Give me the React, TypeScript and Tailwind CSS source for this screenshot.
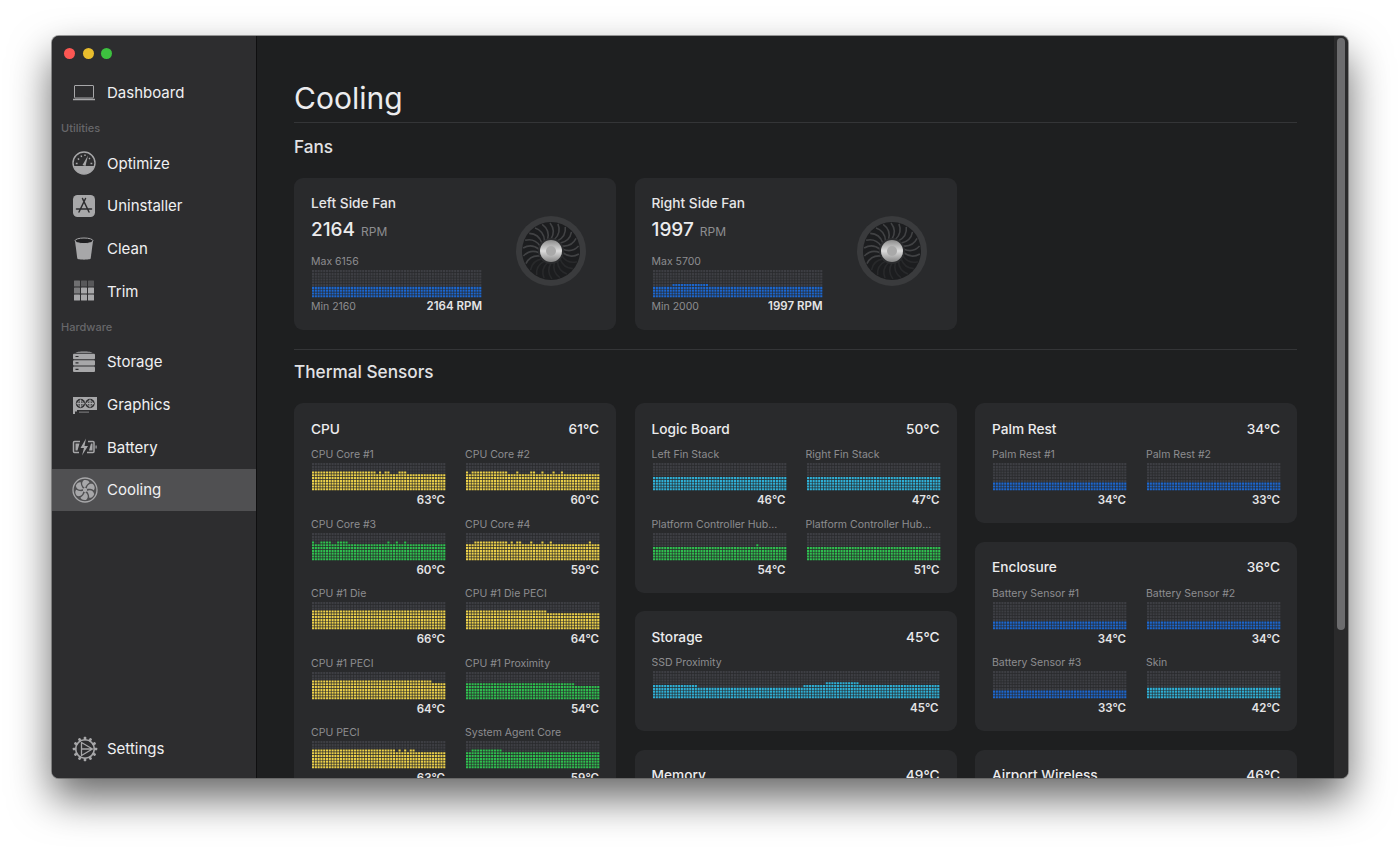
import React from 'react';

const ROWS = 10;
const ROW_H = 2.8;

const YELLOW = '#ebd04a';
const GREEN = '#2fbf4f';
const CYAN = '#2fb0d6';
const BLUE = '#1c67cf';

type Run = [number, number, number];

// runs are [from %, to %, rows]
const Chart = ({ width, base, color, runs = [] }: { width: number; base: number; color: string; runs?: Run[] }) => {
  const n = Math.round(width / 2.8);
  const pitch = width / n;
  let empty = '';
  let filled = '';
  for (let c = 0; c < n; c++) {
    const pct = (c / n) * 100;
    let h = base;
    runs.forEach(([a, b, v]) => {
      if (pct >= a && pct < b) h = v;
    });
    for (let r = 0; r < ROWS; r++) {
      const cell = `M${(c * pitch).toFixed(2)} ${(28 - (r + 1) * ROW_H).toFixed(1)}h2.1v2.1h-2.1z`;
      if (r < h) filled += cell;
      else empty += cell;
    }
  }
  return (
    <svg width={width} height={28} className="block ml-[1px]">
      <path d={empty} fill="#3d3e43" />
      <path d={filled} fill={color} />
    </svg>
  );
};

type Sensor = { name: string; value: string; base: number; color: string; runs?: Run[] };

const SensorCell = ({ s, width = 134 }: { s: Sensor; width?: number }) => (
  <div>
    <div className="h-[14px] mb-[2px] text-[10.5px] leading-[16px] text-[#8d8d90] truncate">{s.name}</div>
    <Chart width={width} base={s.base} color={s.color} runs={s.runs} />
    <div className="h-[14px] text-right text-[11.5px] leading-[18px] font-semibold text-[#e4e4e6]" style={{ width }}>{s.value}</div>
  </div>
);

const SensorCard = ({ title, temp, sensors, wide }: { title: string; temp: string; sensors: Sensor[]; wide?: boolean }) => (
  <div className="bg-[#292a2c] rounded-[9px] px-[17px] pt-[17px] pb-[18px]">
    <CardHead title={title} temp={temp} />
    {wide ? (
      <SensorCell s={sensors[0]} width={287} />
    ) : (
      <div className="grid grid-cols-[134px_134px] gap-x-[20px] gap-y-[11.5px]">
        {sensors.map((s, i) => <SensorCell key={i} s={s} />)}
      </div>
    )}
  </div>
);

const CardHead = ({ title, temp }: { title: string; temp: string }) => (
  <div className="flex justify-between items-center h-[18px] mb-[9px] text-[13.7px] font-medium text-[#ececee]">
    <span>{title}</span>
    <span>{temp}</span>
  </div>
);

const cpu: Sensor[] = [
  { name: 'CPU Core #1', value: '63°C', base: 6, color: YELLOW, runs: [[0, 46, 7], [50, 52, 7], [54, 58, 7], [63, 70, 7], [73, 75, 7]] },
  { name: 'CPU Core #2', value: '60°C', base: 6, color: YELLOW, runs: [[0, 1, 7], [4, 30, 7], [37, 39, 7], [46, 48, 7], [50, 51, 7], [53, 54, 8], [55, 58, 7], [63, 65, 7], [69, 71, 7]] },
  { name: 'CPU Core #3', value: '60°C', base: 6, color: GREEN, runs: [[0, 1, 7], [6, 14, 7], [17, 27, 7], [56, 58, 7], [62, 64, 7], [68, 70, 7]] },
  { name: 'CPU Core #4', value: '59°C', base: 6, color: YELLOW, runs: [[6, 30, 7], [33, 35, 7], [37, 41, 7], [47, 49, 7], [55, 57, 7], [62, 64, 7], [91, 93, 7]] },
  { name: 'CPU #1 Die', value: '66°C', base: 7, color: YELLOW },
  { name: 'CPU #1 Die PECI', value: '64°C', base: 7, color: YELLOW, runs: [[60, 100, 6]] },
  { name: 'CPU #1 PECI', value: '64°C', base: 7, color: YELLOW, runs: [[89, 100, 6]] },
  { name: 'CPU #1 Proximity', value: '54°C', base: 6, color: GREEN, runs: [[80, 100, 5]] },
  { name: 'CPU PECI', value: '63°C', base: 6, color: YELLOW, runs: [[0, 61, 7], [63, 65, 7], [68, 70, 7], [72, 74, 7], [75, 77, 7]] },
  { name: 'System Agent Core', value: '59°C', base: 6, color: GREEN, runs: [[4, 27, 7]] },
];

const logic: Sensor[] = [
  { name: 'Left Fin Stack', value: '46°C', base: 5, color: CYAN },
  { name: 'Right Fin Stack', value: '47°C', base: 5, color: CYAN },
  { name: 'Platform Controller Hub...', value: '54°C', base: 5, color: GREEN, runs: [[76, 78, 6]] },
  { name: 'Platform Controller Hub...', value: '51°C', base: 5, color: GREEN },
];

const palm: Sensor[] = [
  { name: 'Palm Rest #1', value: '34°C', base: 3, color: BLUE },
  { name: 'Palm Rest #2', value: '33°C', base: 3, color: BLUE },
];

const enclosure: Sensor[] = [
  { name: 'Battery Sensor #1', value: '34°C', base: 3, color: BLUE },
  { name: 'Battery Sensor #2', value: '34°C', base: 3, color: BLUE },
  { name: 'Battery Sensor #3', value: '33°C', base: 3, color: BLUE },
  { name: 'Skin', value: '42°C', base: 4, color: CYAN },
];

const FanGraphic = () => (
  <svg width="72" height="72" viewBox="0 0 72 72" className="shrink-0">
    <defs>
      <linearGradient id="hub" x1="0" y1="0" x2="0" y2="1">
        <stop offset="0%" stopColor="#8b8b8b" />
        <stop offset="50%" stopColor="#dcdcdc" />
        <stop offset="100%" stopColor="#858585" />
      </linearGradient>
    </defs>
    <circle cx="36" cy="36" r="35" fill="#3a3b3d" />
    <circle cx="36" cy="36" r="29" fill="#1c1d1f" />
    {Array.from({ length: 22 }).map((_, i) => (
      <path
        key={i}
        d="M36 24C39 19 39 13 35 8"
        fill="none"
        stroke={i > 6 && i < 15 ? '#28292b' : '#414244'}
        strokeWidth="1.6"
        transform={`rotate(${i * (360 / 22)} 36 36)`}
      />
    ))}
    <circle cx="36" cy="36" r="13" fill="#2b2c2e" />
    <circle cx="36" cy="36" r="11" fill="url(#hub)" />
    <circle cx="36" cy="36" r="5" fill="#a9a9a9" />
  </svg>
);

const FanCard = ({ name, rpm, max, min, runs }: { name: string; rpm: string; max: string; min: string; runs: Run[] }) => (
  <div className="bg-[#292a2c] rounded-[9px] h-[152px] pl-[17px] pr-[29px] pt-[16px] flex justify-between">
    <div className="w-[171px]">
      <div className="text-[13.7px] leading-[18px] font-medium text-[#e6e6e8]">{name}</div>
      <div className="mt-[4px] h-[25px] flex items-baseline gap-[6px]">
        <span className="text-[19px] font-medium text-[#ececee]">{rpm}</span>
        <span className="text-[12px] text-[#8d8d90]">RPM</span>
      </div>
      <div className="mt-[13px] h-[14px] text-[10.5px] leading-[16px] text-[#8d8d90]">Max {max}</div>
      <div className="mt-[2px]">
        <Chart width={170} base={4} color={BLUE} runs={runs} />
      </div>
      <div className="flex justify-between items-center h-[18px] text-[10.5px]">
        <span className="text-[#8d8d90]">Min {min}</span>
        <span className="text-[11.5px] font-semibold text-[#e4e4e6]">{rpm} RPM</span>
      </div>
    </div>
    <div className="pt-[21px]">
      <FanGraphic />
    </div>
  </div>
);

const icon = '#a7a7a9';

const LaptopIcon = () => (
  <svg width="24" height="24" viewBox="0 0 24 24" fill="none" stroke={icon}>
    <rect x="2.5" y="5.5" width="19" height="12.5" rx="0.5" strokeWidth="1" />
    <path d="M1 19.5h22" strokeWidth="1.4" />
  </svg>
);

const GaugeIcon = () => (
  <svg width="24" height="24" viewBox="0 0 24 24">
    <circle cx="12" cy="12" r="11" fill="none" stroke={icon} strokeWidth="1.4" />
    <path d="M1.600 15h20.800a10.800 10.800 0 0 1-20.800 0z" fill={icon} />
    <path d="M10.500 14l5.500-9.500 -2.500 10.500z" fill={icon} />
    <path d="M3.800 12.500h1.800M5.800 7.500l1.300 1.100M9 4.500l.7 1.500M13 3.500v1.500M18 7l-1 1M18.500 12.500h1.800" stroke={icon} strokeWidth="1.400" />
  </svg>
);

const AppIcon = () => (
  <svg width="24" height="24" viewBox="0 0 24 24">
    <rect x="1" y="1" width="22" height="22" rx="4.5" fill={icon} />
    <path d="M10.500 4.500L17 18M13.500 4.500L7 18M4.500 15h15" stroke="#2d2d2f" strokeWidth="1.500" fill="none" strokeLinecap="round" />
  </svg>
);

const BinIcon = () => (
  <svg width="24" height="24" viewBox="0 0 24 24">
    <path d="M3 4L5.300 21.500C5.600 23 18.400 23 18.700 21.500L21 4z" fill={icon} />
    <ellipse cx="12" cy="3.800" rx="9" ry="2.800" fill="#1f1f21" stroke={icon} strokeWidth="1" />
  </svg>
);

const GridIcon = () => (
  <svg width="24" height="24" viewBox="0 0 24 24">
    {[0, 1, 2].map(r => [0, 1, 2].map(c => (
      <rect
        key={`${r}-${c}`}
        x={2 + c * 7}
        y={1.5 + r * 7}
        width="6"
        height="6"
        rx="0.5"
        fill={r === 2 || (r === 1 && c > 0) ? icon : r === 1 ? '#7c7c7e' : c === 0 ? '#6f6f71' : '#58585a'}
      />
    )))}
  </svg>
);

const StorageIcon = () => (
  <svg width="24" height="24" viewBox="0 0 24 24" fill={icon}>
    <path d="M3.500 2.800C5 .9 19 .9 20.500 2.800z" />
    <rect x="1" y="3.800" width="22" height="5.400" rx="1" />
    <rect x="1" y="10.200" width="22" height="5.400" rx="1" />
    <rect x="1" y="16.600" width="22" height="5.400" rx="1" />
    <path d="M3.500 6.500h3M3.500 12.900h3M3.500 19.300h3" stroke="#2d2d2f" strokeWidth="1.200" />
  </svg>
);

const GraphicsIcon = () => (
  <svg width="26" height="24" viewBox="0 0 26 24">
    <path d="M1 4h24v13H5v1.500H3V21H1z" fill={icon} />
    <circle cx="8.500" cy="10.500" r="4.700" fill="#2d2d2f" />
    <circle cx="18" cy="10.500" r="4.700" fill="#2d2d2f" />
    <path d="M8.500 6.500v8M4.500 10.500h8M18 6.500v8M14 10.500h8" stroke={icon} strokeWidth="1.300" />
    <circle cx="8.500" cy="10.500" r="2.800" fill="none" stroke={icon} strokeWidth="0.800" />
    <circle cx="18" cy="10.500" r="2.800" fill="none" stroke={icon} strokeWidth="0.800" />
    <path d="M7 18.500h10v1.300H7z" fill="#6f6f71" />
  </svg>
);

const BatteryIcon = () => (
  <svg width="26" height="24" viewBox="0 0 26 24" fill="none">
    <path d="M8 6.500H2.500a1 1 0 0 0-1 1v9a1 1 0 0 0 1 1H7M16 6.500h5a1 1 0 0 1 1 1v9a1 1 0 0 1-1 1h-6" stroke={icon} strokeWidth="1.500" />
    <path d="M3.500 8.500h4l-2 7h-2zM19 8.500h1.500v7H17z" fill={icon} />
    <path d="M14 3.500L8.500 13H12l-2 7.500L16 11h-3.500z" fill={icon} />
    <path d="M23.500 10.500h1.200v3h-1.200z" fill={icon} />
  </svg>
);

const FanIcon = () => (
  <svg width="26" height="26" viewBox="0 0 26 26">
    <circle cx="13" cy="13" r="12" fill="none" stroke={icon} strokeWidth="1.300" />
    {[0, 60, 120, 180, 240, 300].map(a => (
      <path key={a} d="M13 11C10 9 9 5.500 12 3c3.500-.5 5 1 5.500 2.500C15.500 6.500 14 8.500 13 11z" fill={icon} transform={`rotate(${a} 13 13)`} />
    ))}
    <circle cx="13" cy="13" r="2.200" fill={icon} />
  </svg>
);

const GearIcon = () => (
  <svg width="26" height="26" viewBox="0 0 26 26" fill="none">
    {Array.from({ length: 12 }).map((_, i) => (
      <rect key={i} x="11.700" y="0.800" width="2.600" height="3.400" rx="0.600" fill={icon} transform={`rotate(${i * 30} 13 13)`} />
    ))}
    <circle cx="13" cy="13" r="9.300" stroke={icon} strokeWidth="1.600" />
    <path d="M9.500 6.500v13L20.500 13zM9.500 13h11" stroke={icon} strokeWidth="1.300" strokeLinejoin="round" />
  </svg>
);

const NavItem = ({ label, children, active }: { label: string; children: React.ReactNode; active?: boolean }) => (
  <div className={`flex items-center h-[42.67px] pl-[20px] ${active ? 'bg-[#505052]' : ''}`}>
    <div className="w-[35px] shrink-0">{children}</div>
    <span className="pt-[1px] text-[15px] text-[#f0f0f2]">{label}</span>
  </div>
);

const SectionLabel = ({ label, h }: { label: string; h: string }) => (
  <div className={`${h} flex items-center pl-[9px] text-[11px] font-medium text-[#67676a]`}>{label}</div>
);

export default function App() {
  return (
    <div className="w-[1400px] h-[847px] bg-white overflow-hidden pt-[36px] px-[52px] font-[Inter,sans-serif]">
      <div className="h-[742px] flex rounded-[7px] overflow-hidden bg-[#1e1f20] shadow-[0_0_0_1px_rgba(90,90,90,0.6),0_20px_42px_rgba(0,0,0,0.6)]">
        <aside className="w-[205px] shrink-0 flex flex-col bg-[#2d2d2f] border-r border-[#0f0f10]">
          <div className="h-[35px] flex items-center gap-[7.5px] pl-[12px]">
            <span className="w-[11px] h-[11px] rounded-full bg-[#fc5753]" />
            <span className="w-[11px] h-[11px] rounded-full bg-[#e9bd2d]" />
            <span className="w-[11px] h-[11px] rounded-full bg-[#3dc13f]" />
          </div>
          <NavItem label="Dashboard"><LaptopIcon /></NavItem>
          <SectionLabel label="Utilities" h="h-[28.5px]" />
          <NavItem label="Optimize"><GaugeIcon /></NavItem>
          <NavItem label="Uninstaller"><AppIcon /></NavItem>
          <NavItem label="Clean"><BinIcon /></NavItem>
          <NavItem label="Trim"><GridIcon /></NavItem>
          <SectionLabel label="Hardware" h="h-[28px]" />
          <NavItem label="Storage"><StorageIcon /></NavItem>
          <NavItem label="Graphics"><GraphicsIcon /></NavItem>
          <NavItem label="Battery"><BatteryIcon /></NavItem>
          <NavItem label="Cooling" active><FanIcon /></NavItem>
          <div className="mt-auto mb-[8px]">
            <NavItem label="Settings"><GearIcon /></NavItem>
          </div>
        </aside>

        <main className="flex-1 min-w-0 overflow-hidden px-[37px] pt-[42px]">
          <h1 className="text-[30px] leading-[40px] font-normal text-[#ececee]">Cooling</h1>
          <div className="mt-[4px] border-t border-[#343537]" />
          <h2 className="mt-[11px] text-[17.2px] leading-[25px] font-medium text-[#e2e2e4]">Fans</h2>
          <div className="mt-[19px] grid grid-cols-3 gap-x-[18.5px]">
            <FanCard name="Left Side Fan" rpm="2164" max="6156" min="2160" runs={[]} />
            <FanCard name="Right Side Fan" rpm="1997" max="5700" min="2000" runs={[[10, 32, 5]]} />
          </div>
          <div className="mt-[19px] border-t border-[#343537]" />
          <h2 className="mt-[9px] text-[17.2px] leading-[25px] font-medium text-[#e2e2e4]">Thermal Sensors</h2>
          <div className="mt-[19px] grid grid-cols-3 gap-x-[18.5px] items-start">
            <div className="flex flex-col gap-[18.5px]">
              <SensorCard title="CPU" temp="61°C" sensors={cpu} />
            </div>
            <div className="flex flex-col gap-[18.5px]">
              <SensorCard title="Logic Board" temp="50°C" sensors={logic} />
              <SensorCard
                title="Storage"
                temp="45°C"
                wide
                sensors={[{ name: 'SSD Proximity', value: '45°C', base: 4, color: CYAN, runs: [[0, 15, 5], [52, 60, 5], [60, 71, 6], [71, 76, 5], [76, 100, 5]] }]}
              />
              <div className="bg-[#292a2c] rounded-[9px] px-[17px] pt-[17px] h-[120px]">
                <CardHead title="Memory" temp="49°C" />
              </div>
            </div>
            <div className="flex flex-col gap-[18.5px]">
              <SensorCard title="Palm Rest" temp="34°C" sensors={palm} />
              <SensorCard title="Enclosure" temp="36°C" sensors={enclosure} />
              <div className="bg-[#292a2c] rounded-[9px] px-[17px] pt-[17px] h-[120px]">
                <CardHead title="Airport Wireless" temp="46°C" />
              </div>
            </div>
          </div>
        </main>

        <div className="w-[14px] shrink-0 bg-[#2a2a2b] pt-[2px] px-[3px]">
          <div className="h-[592px] rounded-full bg-[#6c6c6e]" />
        </div>
      </div>
    </div>
  );
}
